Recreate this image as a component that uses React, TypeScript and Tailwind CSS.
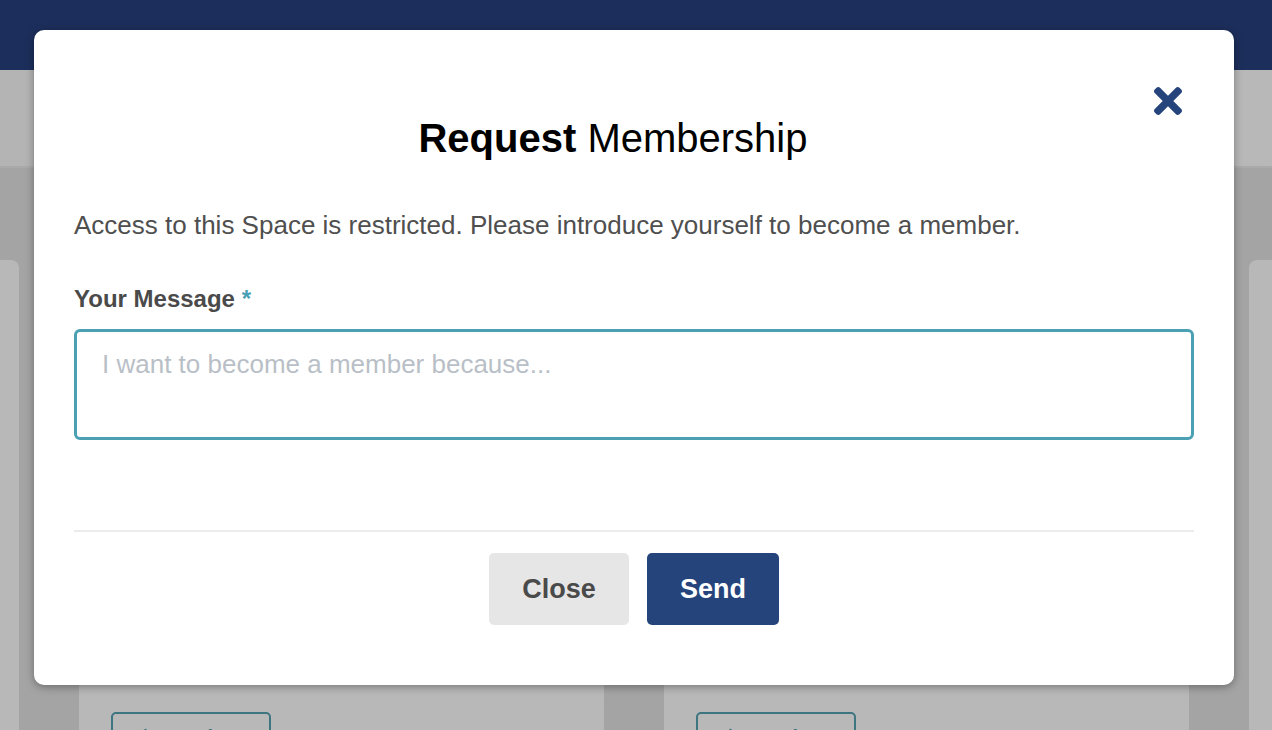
import React from "react";

function XIcon() {
  return (
    <svg width="28" height="28" viewBox="0 80 352 352" aria-hidden="true">
      <path
        fill="#26447c"
        d="M242.72 256l100.07-100.07c12.28-12.280 12.28-32.19 0-44.48l-22.24-22.24c-12.28-12.28-32.19-12.28-44.48 0L176 189.28 75.93 89.21c-12.28-12.28-32.19-12.28-44.48 0L9.21 111.45c-12.28 12.28-12.28 32.19 0 44.48L109.28 256 9.21 356.07c-12.28 12.28-12.28 32.19 0 44.48l22.24 22.24c12.28 12.28 32.2 12.28 44.48 0L176 322.72l100.07 100.070c12.28 12.28 32.2 12.28 44.48 0l22.24-22.24c12.28-12.28 12.28-32.19 0-44.48L242.72 256z"
      />
    </svg>
  );
}

function Card({ withButton }: { withButton?: boolean }) {
  return (
    <div className="w-[525px] h-[600px] shrink-0 rounded-[8px] bg-white pt-[452px] pl-[32px]">
      {withButton && (
        <div className="w-[160px] h-[44px] rounded-[5px] border-2 border-[#55a3b2] flex items-start gap-2 px-[24px] pt-[8px] text-[#55a3b2] text-[20px] font-bold">
          <span>⬆</span>
          <span>Member</span>
        </div>
      )}
    </div>
  );
}

export default function App() {
  return (
    <div
      className="relative w-[1272px] h-[730px] overflow-hidden bg-[#e3e3e3]"
      style={{ fontFamily: '"Liberation Sans", Arial, Helvetica, sans-serif' }}
    >
      {/* Page underneath */}
      <div className="h-[70px] bg-[#28417e]" />
      <div className="h-[98px] bg-gradient-to-r from-[#fafafa] to-[#ffffff] border-b-2 border-[#ececec]" />
      <div className="pt-[92px]">
        <div className="flex gap-[60px] ml-[-506px]">
          <Card />
          <Card withButton />
          <Card withButton />
          <Card />
        </div>
      </div>

      {/* Backdrop */}
      <div className="absolute inset-0 bg-black/[0.28]" />

      {/* Modal */}
      <div className="absolute left-[34px] top-[30px] w-[1200px] h-[655px] rounded-[10px] bg-white shadow-[0_2px_8px_rgba(0,0,0,0.35)] px-[40px] flex flex-col">
        <button className="absolute top-[57px] right-[52px] w-[28px] h-[28px] flex items-center justify-center">
          <XIcon />
        </button>

        <h2 className="mt-[88px] pr-[42px] text-center text-[40px] leading-[40px] text-black">
          <span className="font-bold">Request</span> Membership
        </h2>

        <p className="mt-[49px] text-[26px] leading-[36px] text-[#4f4f4f]">
          Access to this Space is restricted. Please introduce yourself to become a member.
        </p>

        <label className="mt-[40px] text-[24px] leading-[32px] font-bold text-[#4a4a4a]">
          Your Message <span className="text-[#4a9fb5]">*</span>
        </label>

        <textarea
          className="mt-[14px] h-[111px] w-full resize-none rounded-[6px] border-[3px] border-[#4ba0b4] pl-[25px] pt-[14px] text-[26px] leading-[36px] text-[#4a4a4a] outline-none placeholder:text-[#b9bfc7]"
          placeholder="I want to become a member because..."
        />

        <div className="mt-[90px] h-[2px] bg-[#ececec]" />

        <div className="mt-[21px] flex justify-center gap-[18px]">
          <button className="h-[72px] w-[140px] rounded-[5px] bg-[#e6e6e6] text-[27px] font-bold text-[#4a4a4a] flex items-center justify-center">
            Close
          </button>
          <button className="h-[72px] w-[132px] rounded-[5px] bg-[#26447c] text-[27px] font-bold text-white flex items-center justify-center">
            Send
          </button>
        </div>
      </div>
    </div>
  );
}
